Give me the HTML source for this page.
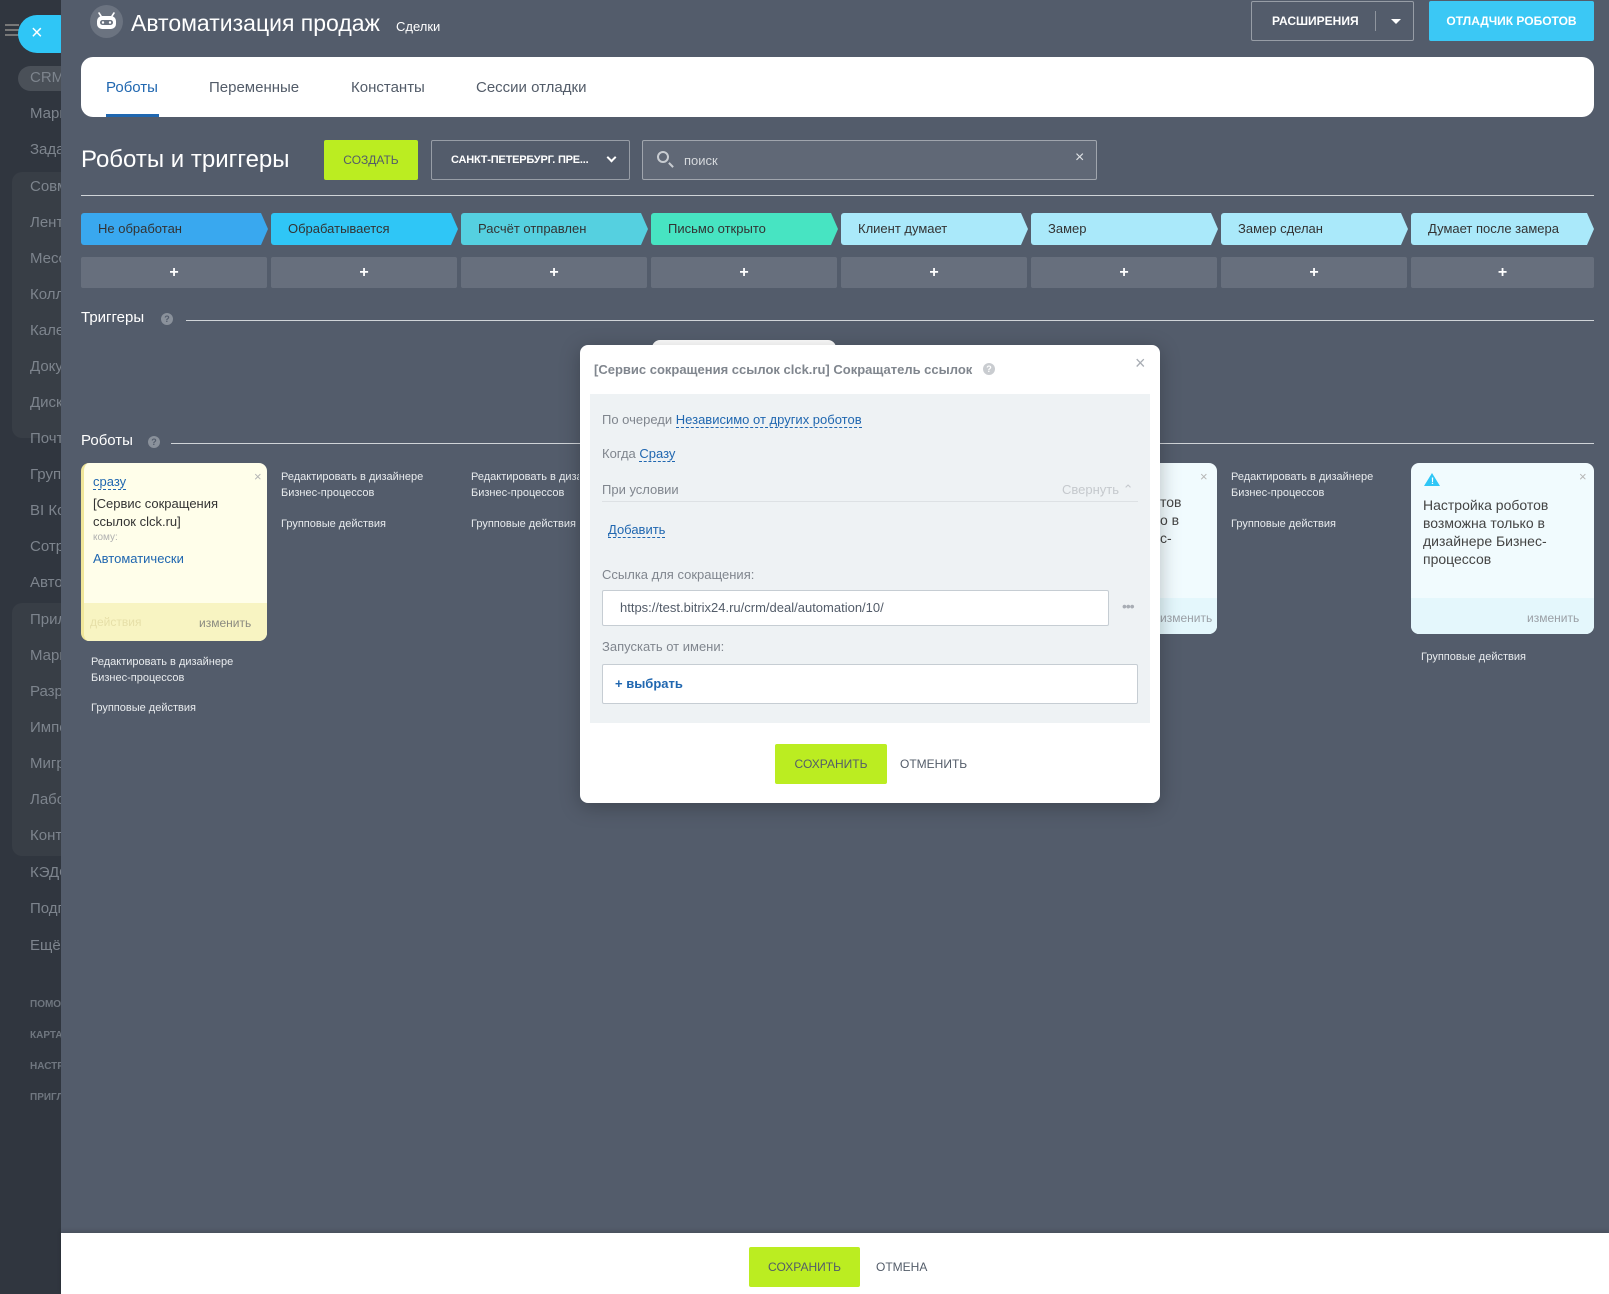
<!DOCTYPE html>
<html><head><meta charset="utf-8">
<style>
*{box-sizing:border-box;margin:0;padding:0}
body{width:1609px;height:1294px;overflow:hidden;position:relative;font-family:"Liberation Sans","Noto Sans CJK SC",sans-serif;background:#2c3139}
.abs{position:absolute}
#side{left:0;top:0;width:61px;height:1294px;background:#30363f;overflow:hidden}
#side .it{position:absolute;left:30px;font-size:15px;color:#7d848d;white-space:nowrap}
#side .sm{position:absolute;left:30px;font-size:10px;font-weight:bold;color:#6f767f}
#main{left:61px;top:0;width:1548px;height:1233px;background:#535c6b}
.stage{position:absolute;top:213px;height:32px;font-size:13px;color:#333;line-height:32px;padding-left:17px;clip-path:polygon(0 0,calc(100% - 7px) 0,100% 50%,calc(100% - 7px) 100%,0 100%);border-radius:3px}
.plus{position:absolute;top:257px;height:31px;background:rgba(255,255,255,.12);color:#fff;font-size:16px;font-weight:bold;text-align:center;line-height:31px;border-radius:2px}
.col{position:absolute;font-size:11px;color:#e8ebee;line-height:16px}
.btnG{background:#bbed21;color:#535c69;font-size:12px;text-align:center;border-radius:2px}
.lnk{color:#2067b0;border-bottom:1px dashed #2067b0}
</style></head><body>
<div id="side" class="abs">
<div class="abs" style="left:5px;top:24px;width:14px;height:2px;background:#777;box-shadow:0 5px 0 #777,0 10px 0 #777"></div>
<div class="abs" style="left:18px;top:15px;width:60px;height:38px;border-radius:19px;background:#2fc6f6;color:#fff;font-size:20px;line-height:36px;padding-left:13px">×</div>
<div class="abs" style="left:18px;top:66px;width:60px;height:25px;border-radius:13px;background:#4a5058"></div>
<div class="abs" style="left:12px;top:172px;width:60px;height:266px;border-radius:10px;background:#383e46"></div>
<div class="abs" style="left:12px;top:603px;width:60px;height:253px;border-radius:10px;background:#383e46"></div>
<div class="it" style="top:69px">CRM</div>
<div class="it" style="top:105px">Маркет</div><div class="it" style="top:141px">Задачи</div><div class="it" style="top:178px">Совм</div><div class="it" style="top:214px">Лента</div><div class="it" style="top:250px">Месс</div><div class="it" style="top:286px">Колл</div><div class="it" style="top:322px">Кален</div><div class="it" style="top:358px">Доку</div><div class="it" style="top:394px">Диск</div><div class="it" style="top:430px">Почта</div><div class="it" style="top:466px">Групп</div><div class="it" style="top:502px">BI Ко</div><div class="it" style="top:538px">Сотр</div><div class="it" style="top:574px">Авто</div><div class="it" style="top:611px">Прил</div><div class="it" style="top:647px">Марк</div><div class="it" style="top:683px">Разр</div><div class="it" style="top:719px">Импо</div><div class="it" style="top:755px">Мигр</div><div class="it" style="top:791px">Лабо</div><div class="it" style="top:827px">Конт</div><div class="it" style="top:864px">КЭДО</div><div class="it" style="top:900px">Подп</div><div class="it" style="top:937px">Ещё</div>
<div class="sm" style="top:999px">ПОМОЩЬ</div><div class="sm" style="top:1030px">КАРТА</div><div class="sm" style="top:1061px">НАСТР</div><div class="sm" style="top:1092px">ПРИГЛ</div>
</div>
<div id="main" class="abs"></div>
<!-- header -->
<div class="abs" style="left:90px;top:5px;width:33px;height:33px;border-radius:50%;background:#6b7380"></div>
<svg class="abs" style="left:90px;top:5px" width="33" height="33" viewBox="0 0 33 33"><path d="M11 11 L9 8 M22 11 L24 8" stroke="#fff" stroke-width="1.6" stroke-linecap="round"/><rect x="7" y="11" width="19" height="13" rx="5" fill="#fff"/><rect x="10" y="15" width="13" height="5" rx="2.5" fill="#6b7380"/><circle cx="13" cy="17.5" r="1.2" fill="#fff"/><circle cx="20" cy="17.5" r="1.2" fill="#fff"/></svg>
<div class="abs" style="left:131px;top:10px;font-size:23px;color:#fff">Автоматизация продаж</div>
<div class="abs" style="left:396px;top:19px;font-size:13px;color:#fff">Сделки</div>
<div class="abs" style="left:1251px;top:1px;width:163px;height:40px;border:1px solid rgba(255,255,255,.4);border-radius:2px;color:#fff;font-size:12px;font-weight:bold;line-height:38px;padding-left:20px">РАСШИРЕНИЯ<span class="abs" style="left:123px;top:9px;width:1px;height:20px;background:rgba(255,255,255,.35)"></span><span class="abs" style="left:139px;top:17px;border:5px solid transparent;border-top-color:#fff"></span></div>
<div class="abs" style="left:1429px;top:1px;width:165px;height:40px;background:#3bc8f5;border-radius:2px;color:#fff;font-size:12px;font-weight:bold;line-height:40px;text-align:center">ОТЛАДЧИК РОБОТОВ</div>
<!-- tabs -->
<div class="abs" style="left:81px;top:57px;width:1513px;height:60px;background:#fff;border-radius:12px"></div>
<div class="abs" style="left:106px;top:79px;font-size:15px;color:#2067b0">Роботы</div>
<div class="abs" style="left:106px;top:114px;width:53px;height:3px;background:#2067b0"></div>
<div class="abs" style="left:209px;top:79px;font-size:15px;color:#535c69">Переменные</div>
<div class="abs" style="left:351px;top:79px;font-size:15px;color:#535c69">Константы</div>
<div class="abs" style="left:476px;top:79px;font-size:15px;color:#535c69">Сессии отладки</div>
<!-- toolbar -->
<div class="abs" style="left:81px;top:146px;font-size:24px;color:#fff">Роботы и триггеры</div>
<div class="abs btnG" style="left:324px;top:140px;width:94px;height:40px;line-height:40px">СОЗДАТЬ</div>
<div class="abs" style="left:431px;top:140px;width:199px;height:40px;border:1px solid rgba(255,255,255,.4);border-radius:2px;color:#fff;font-size:11px;font-weight:bold;line-height:38px;padding-left:19px;letter-spacing:-.2px">САНКТ-ПЕТЕРБУРГ. ПРЕ...<span class="abs" style="left:176px;top:13px;width:7px;height:7px;border-right:2px solid #fff;border-bottom:2px solid #fff;transform:rotate(45deg)"></span></div>
<div class="abs" style="left:642px;top:140px;width:455px;height:40px;border:1px solid rgba(255,255,255,.4);border-radius:2px;background:rgba(255,255,255,.08)">
<span class="abs" style="left:14px;top:10px;width:12px;height:12px;border:2px solid #c8ccd1;border-radius:50%"></span><span class="abs" style="left:25px;top:23px;width:6px;height:2px;background:#c8ccd1;transform:rotate(45deg)"></span>
<span class="abs" style="left:41px;top:12px;font-size:13px;color:#d5d8dc">поиск</span><span class="abs" style="left:432px;top:8px;font-size:16px;color:#dfe2e5">×</span></div>
<div class="abs" style="left:81px;top:195px;width:1513px;height:1px;background:#d0d4d8"></div>
<!-- stages -->
<div class="stage" style="left:81px;width:187px;background:#39a8ef">Не обработан</div>
<div class="stage" style="left:271px;width:187px;background:#2fc6f6">Обрабатывается</div>
<div class="stage" style="left:461px;width:187px;background:#55d0e0">Расчёт отправлен</div>
<div class="stage" style="left:651px;width:187px;background:#47e4c2">Письмо открыто</div>
<div class="stage" style="left:841px;width:187px;background:#aae9fa">Клиент думает</div>
<div class="stage" style="left:1031px;width:187px;background:#aae9fa">Замер</div>
<div class="stage" style="left:1221px;width:187px;background:#aae9fa">Замер сделан</div>
<div class="stage" style="left:1411px;width:183px;background:#aae9fa">Думает после замера</div>
<div class="plus" style="left:81px;width:186px">+</div><div class="plus" style="left:271px;width:186px">+</div><div class="plus" style="left:461px;width:186px">+</div><div class="plus" style="left:651px;width:186px">+</div><div class="plus" style="left:841px;width:186px">+</div><div class="plus" style="left:1031px;width:186px">+</div><div class="plus" style="left:1221px;width:186px">+</div><div class="plus" style="left:1411px;width:183px">+</div>
<!-- sections -->
<div class="abs" style="left:81px;top:309px;font-size:15px;color:#fff">Триггеры</div>
<div class="abs" style="left:161px;top:313px;width:12px;height:12px;border-radius:50%;background:#8a919b;color:#535c6b;font-size:9px;font-weight:bold;text-align:center;line-height:12px">?</div>
<div class="abs" style="left:186px;top:320px;width:1408px;height:1px;background:#d0d4d8"></div>
<div class="abs" style="left:81px;top:432px;font-size:15px;color:#fff">Роботы</div>
<div class="abs" style="left:148px;top:436px;width:12px;height:12px;border-radius:50%;background:#8a919b;color:#535c6b;font-size:9px;font-weight:bold;text-align:center;line-height:12px">?</div>
<div class="abs" style="left:171px;top:443px;width:1423px;height:1px;background:#d0d4d8"></div>
<!-- card 1 -->
<div class="abs" style="left:81px;top:463px;width:186px;height:178px;background:#fffeea;border-radius:8px;border-left:3px solid #f0e69a;overflow:hidden">
<div class="abs" style="left:0;top:140px;width:186px;height:38px;background:#f8f4c2"></div>
<span class="abs lnk" style="left:9px;top:11px;font-size:13px">сразу</span>
<span class="abs" style="left:170px;top:6px;font-size:13px;color:#b5b5b5">×</span>
<div class="abs" style="left:9px;top:32px;font-size:13px;color:#333;line-height:18px;width:170px">[Сервис сокращения ссылок clck.ru]</div>
<div class="abs" style="left:9px;top:69px;font-size:10px;color:#b0b0b0">кому:</div>
<div class="abs" style="left:9px;top:88px;font-size:13px;color:#2067b0">Автоматически</div>
<div class="abs" style="left:6px;top:152px;font-size:12px;color:#e6dfa8">действия</div>
<div class="abs" style="left:115px;top:153px;font-size:12px;color:#8a8a80">изменить</div></div>
<div class="col" style="left:91px;top:654px">Редактировать в дизайнере<br>Бизнес-процессов</div>
<div class="col" style="left:91px;top:700px">Групповые действия</div>
<div class="col" style="left:281px;top:469px">Редактировать в дизайнере<br>Бизнес-процессов</div>
<div class="col" style="left:281px;top:516px">Групповые действия</div>
<div class="col" style="left:471px;top:469px;width:108px;overflow:hidden;white-space:nowrap">Редактировать в дизайнере<br>Бизнес-процессов</div>
<div class="col" style="left:471px;top:516px">Групповые действия</div>
<!-- card 6 partial -->
<div class="abs" style="left:1100px;top:463px;width:117px;height:171px;background:#f1fbfe;border-radius:0 8px 8px 0;overflow:hidden">
<div class="abs" style="left:0;top:135px;width:117px;height:36px;background:#e4f7fc"></div>
<span class="abs" style="left:100px;top:6px;font-size:13px;color:#b5b5b5">×</span>
<div class="abs" style="left:60px;top:30px;font-size:14px;color:#444;line-height:18px;white-space:pre">тов
о в
с-</div>
<div class="abs" style="left:60px;top:148px;font-size:12px;color:#9a9fa5">изменить</div></div>
<div class="col" style="left:1231px;top:469px">Редактировать в дизайнере<br>Бизнес-процессов</div>
<div class="col" style="left:1231px;top:516px">Групповые действия</div>
<!-- card 8 -->
<div class="abs" style="left:1411px;top:463px;width:183px;height:171px;background:#f1fbfe;border-radius:8px;overflow:hidden">
<div class="abs" style="left:0;top:135px;width:183px;height:36px;background:#e4f7fc"></div>
<div class="abs" style="left:13px;top:10px;width:0;height:0;border-left:8px solid transparent;border-right:8px solid transparent;border-bottom:13px solid #2fc6f6"></div>
<span class="abs" style="left:20px;top:13px;font-size:9px;color:#fff;font-weight:bold">!</span>
<span class="abs" style="left:168px;top:6px;font-size:13px;color:#b5b5b5">×</span>
<div class="abs" style="left:12px;top:33px;font-size:14px;color:#444;line-height:18px;width:160px">Настройка роботов возможна только в дизайнере Бизнес-процессов</div>
<div class="abs" style="left:116px;top:148px;font-size:12px;color:#9a9fa5">изменить</div></div>
<div class="col" style="left:1421px;top:649px">Групповые действия</div>
<!-- modal -->
<div class="abs" style="left:652px;top:340px;width:184px;height:20px;background:#fff;border-radius:8px 8px 0 0"></div>
<div class="abs" style="left:580px;top:345px;width:580px;height:458px;background:#fff;border-radius:8px;box-shadow:0 4px 20px rgba(0,0,0,.25)">
<div class="abs" style="left:14px;top:17px;font-size:13px;font-weight:bold;color:#80868e">[Сервис сокращения ссылок clck.ru] Сокращатель ссылок</div>
<div class="abs" style="left:403px;top:18px;width:12px;height:12px;border-radius:50%;background:#c9ccd0;color:#fff;font-size:9px;font-weight:bold;text-align:center;line-height:12px">?</div>
<div class="abs" style="left:555px;top:8px;font-size:18px;color:#a8adb4">×</div>
<div class="abs" style="left:10px;top:49px;width:560px;height:329px;background:#eef2f4">
<div class="abs" style="left:12px;top:18px;font-size:13px;color:#80868e">По очереди <span class="lnk">Независимо от других роботов</span></div>
<div class="abs" style="left:12px;top:52px;font-size:13px;color:#80868e">Когда <span class="lnk">Сразу</span></div>
<div class="abs" style="left:12px;top:88px;font-size:13px;color:#80868e">При условии</div>
<div class="abs" style="left:472px;top:88px;font-size:13px;color:#c5c9cd">Свернуть ⌃</div>
<div class="abs" style="left:12px;top:107px;width:536px;height:1px;background:#dde1e4"></div>
<div class="abs" style="left:18px;top:128px;font-size:13px"><span class="lnk">Добавить</span></div>
<div class="abs" style="left:12px;top:173px;font-size:13px;color:#80868e">Ссылка для сокращения:</div>
<div class="abs" style="left:12px;top:196px;width:507px;height:36px;background:#fff;border:1px solid #c6cdd3;border-radius:2px;font-size:13px;color:#535c69;line-height:34px;padding-left:17px">https://test.bitrix24.ru/crm/deal/automation/10/</div>
<div class="abs" style="left:532px;top:204px;font-size:14px;color:#a8adb4;letter-spacing:-1px">•••</div>
<div class="abs" style="left:12px;top:245px;font-size:13px;color:#80868e">Запускать от имени:</div>
<div class="abs" style="left:12px;top:270px;width:536px;height:40px;background:#fff;border:1px solid #c6cdd3;border-radius:2px;font-size:13px;font-weight:bold;color:#2067b0;line-height:38px;padding-left:12px">+ выбрать</div>
</div>
<div class="abs btnG" style="left:195px;top:399px;width:112px;height:40px;line-height:40px">СОХРАНИТЬ</div>
<div class="abs" style="left:320px;top:392px;font-size:12px;color:#535c69;line-height:54px">ОТМЕНИТЬ</div>
</div>
<!-- footer -->
<div class="abs" style="left:61px;top:1233px;width:1548px;height:61px;background:#fff;box-shadow:0 -2px 4px rgba(0,0,0,.15)"></div>
<div class="abs btnG" style="left:749px;top:1247px;width:111px;height:40px;line-height:40px">СОХРАНИТЬ</div>
<div class="abs" style="left:876px;top:1260px;font-size:12px;color:#535c69">ОТМЕНА</div>
</body></html>
